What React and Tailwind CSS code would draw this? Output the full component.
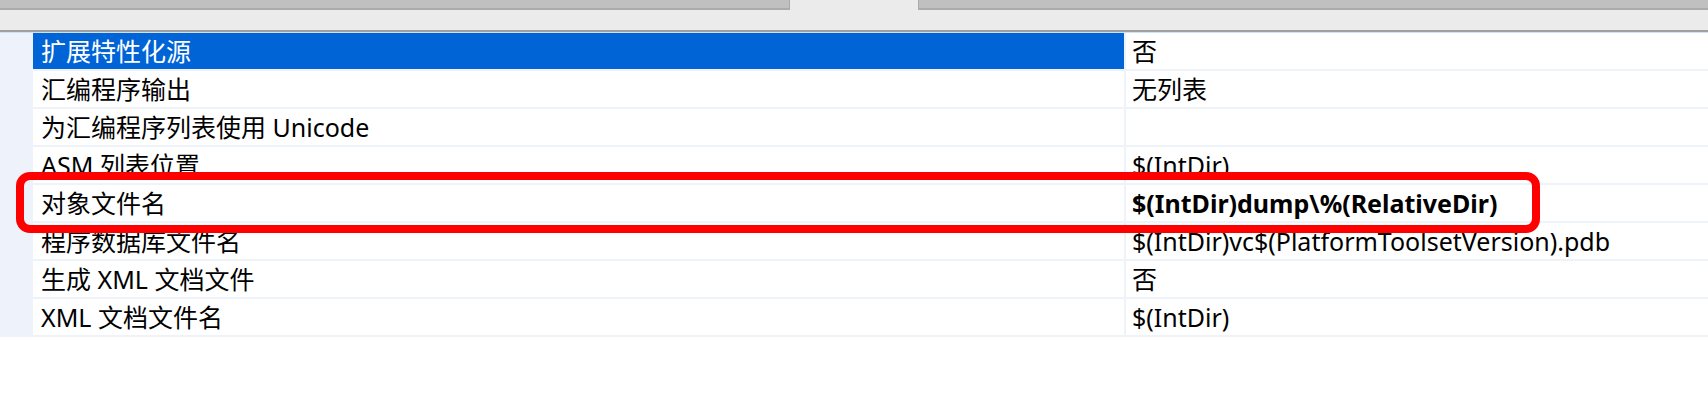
import React from 'react';

const rows = [
  { label: '扩展特性化源', value: '否', selected: true },
  { label: '汇编程序输出', value: '无列表' },
  { label: '为汇编程序列表使用 Unicode', value: '' },
  { label: 'ASM 列表位置', value: '$(IntDir)' },
  { label: '对象文件名', value: '$(IntDir)dump\\%(RelativeDir)', bold: true },
  { label: '程序数据库文件名', value: '$(IntDir)vc$(PlatformToolsetVersion).pdb' },
  { label: '生成 XML 文档文件', value: '否' },
  { label: 'XML 文档文件名', value: '$(IntDir)' },
];

const PropertyRow = ({ row }) => (
  <div className="flex h-[38px] border-b-2 border-[#eef3fa]">
    <div
      className={
        row.selected
          ? 'w-[1091px] flex items-center pl-[8px] bg-[#0064d6] text-white'
          : 'w-[1091px] flex items-center pl-[8px] bg-white text-black'
      }
    >
      <span className="whitespace-nowrap">{row.label}</span>
    </div>
    <div className="w-[2px] bg-[#eef3fa]" />
    <div className="flex-1 flex items-center pl-[6px] bg-white text-black">
      <span className={row.bold ? 'whitespace-nowrap font-bold' : 'whitespace-nowrap'}>{row.value}</span>
    </div>
  </div>
);

export default function App() {
  return (
    <div className="relative w-[1708px] h-[414px] bg-white overflow-hidden font-['Noto_Sans','Noto_Sans_CJK_SC',sans-serif] text-[25px] leading-none">
      {/* top tab strip */}
      <div className="flex h-[10px]">
        <div className="w-[790px] bg-[#c0c0c0] border-b-2 border-r border-[#ababab]" />
        <div className="w-[128px] bg-[#ebebeb]" />
        <div className="flex-1 bg-[#c0c0c0] border-b-2 border-l border-[#ababab]" />
      </div>
      <div className="h-[20px] bg-[#ebebeb]" />
      <div className="h-[2px] bg-[#a0a0a0]" />
      <div className="h-[1px] bg-[#cfe1f5]" />

      {/* property grid */}
      <div className="flex">
        <div className="w-[33px] bg-[#eef3fb]" />
        <div className="flex-1">
          {rows.map((row) => (
            <PropertyRow key={row.label} row={row} />
          ))}
        </div>
      </div>

      {/* highlight box */}
      <div className="absolute left-[16px] top-[172px] w-[1524px] h-[61px] border-[8px] border-[#ff0000] rounded-[14px]" />
    </div>
  );
}
